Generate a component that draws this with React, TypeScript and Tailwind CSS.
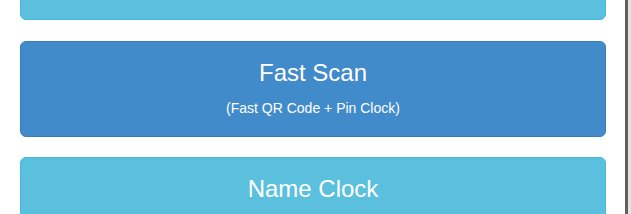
import React from 'react';

type ClockOption = {
  title: string;
  subtitle?: string;
  tone: 'primary' | 'info';
};

const options: ClockOption[] = [
  { title: 'Fast Scan', subtitle: '(Fast QR Code + Pin Clock)', tone: 'primary' },
  { title: 'Name Clock', tone: 'info' },
];

const toneClass = {
  primary: 'bg-[#428bca] border-[#357ebd]',
  info: 'bg-[#5bc0de] border-[#46b8da]',
};

const ClockButton = ({ option }: { option: ClockOption }) => (
  <button
    className={`w-full h-[96px] shrink-0 flex flex-col items-center rounded-[6px] border text-white pt-[17px] ${toneClass[option.tone]}`}
  >
    <span className="text-[24px] leading-[28px]">{option.title}</span>
    {option.subtitle && (
      <span className="mt-[11px] text-[14px] leading-[20px]">{option.subtitle}</span>
    )}
  </button>
);

export default function App() {
  return (
    <div
      className="flex h-[214px] w-[631px] overflow-hidden bg-white"
      style={{ fontFamily: '"Liberation Sans", Arial, sans-serif' }}
    >
      <div className="flex w-[625px] flex-col gap-[20px] pl-[20px] pr-[19px]">
        {/* previous option, scrolled mostly out of view */}
        <div className="-mt-[76px] h-[96px] shrink-0 rounded-[6px] border border-[#46b8da] bg-[#5bc0de]" />
        <div className="mt-[1px]">
          <ClockButton option={options[0]} />
        </div>
        <ClockButton option={options[1]} />
      </div>
      <div className="w-[3px] bg-[#5f5f5f]" />
      <div className="w-[3px] bg-[#e3e3e3]" />
    </div>
  );
}
